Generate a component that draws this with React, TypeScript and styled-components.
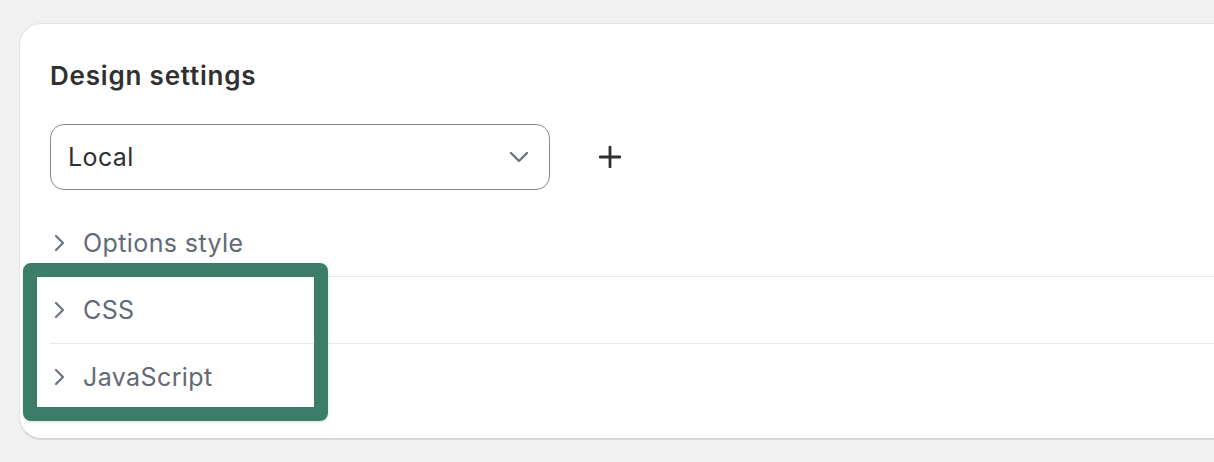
import { FC } from "react";
import styled, { createGlobalStyle } from "styled-components";

const GlobalStyle = createGlobalStyle`
  html, body {
    margin: 0;
    padding: 0;
    background: #f1f1f1;
    overflow: hidden;
  }
  body {
    font-family: Inter, "Noto Sans", "Liberation Sans", sans-serif;
  }
`;

//ページ全体
const Page = styled.div`
  position: relative;
  width: 1214px;
  height: 462px;
  overflow: hidden;
  padding: 23px 0 0 19px;
  box-sizing: border-box;
`;

//カード(右側は画面外まで続く)
const Card = styled.section`
  width: 1260px;
  box-sizing: border-box;
  background: #ffffff;
  border: 1px solid #e3e3e3;
  border-bottom-color: #d2d2d2;
  border-radius: 22px;
  box-shadow: 0 1px 0 #d6d6d6;
  padding: 36px 0 28px 30px;
`;

const Title = styled.h2`
  margin: 0;
  font-size: 26px;
  line-height: 32px;
  font-weight: 600;
  color: #303030;
  letter-spacing: 0.8px;
`;

const SelectRow = styled.div`
  display: flex;
  align-items: center;
  gap: 48px;
  margin-top: 32px;
`;

const SelectBox = styled.button`
  display: flex;
  align-items: center;
  justify-content: space-between;
  width: 500px;
  height: 66px;
  box-sizing: border-box;
  padding: 0 20px 0 17px;
  background: #ffffff;
  border: 1px solid #8a8a8a;
  border-radius: 14px;
  font-family: inherit;
  font-size: 25px;
  letter-spacing: 0.4px;
  color: #303030;
  cursor: pointer;
`;

const PlusButton = styled.button`
  display: flex;
  align-items: center;
  justify-content: center;
  width: 24px;
  height: 24px;
  padding: 0;
  border: none;
  background: transparent;
  cursor: pointer;
`;

const Sections = styled.div`
  margin-top: 20px;
`;

const SectionRow = styled.div<{ $divider: boolean }>`
  display: flex;
  align-items: center;
  gap: 18px;
  height: 66px;
  padding-left: 3px;
  border-bottom: ${(p) => (p.$divider ? "1.5px solid #e8e8ed" : "none")};
  font-size: 25px;
  letter-spacing: 0.4px;
  color: #616a75;
  cursor: pointer;
`;

//注釈の枠(スクリーンショット上のハイライト)
const Highlight = styled.div`
  position: absolute;
  left: 23px;
  top: 263px;
  width: 305px;
  height: 158px;
  box-sizing: border-box;
  border: 14px solid #3c7d6a;
  border-radius: 8px;
  box-shadow: 0 1px 3px rgba(0, 0, 0, 0.15);
  pointer-events: none;
`;

const ChevronDown: FC = () => (
  <svg width="20" height="12" viewBox="0 0 20 12" fill="none">
    <path d="M2 2l8 8 8-8" stroke="#6b7280" strokeWidth="2.4" strokeLinecap="round" strokeLinejoin="round" />
  </svg>
);

const ChevronRight: FC = () => (
  <svg width="12" height="18" viewBox="0 0 12 18" fill="none">
    <path d="M3 2l7 7-7 7" stroke="#6b7280" strokeWidth="2.2" strokeLinecap="round" strokeLinejoin="round" />
  </svg>
);

const Plus: FC = () => (
  <svg width="22" height="22" viewBox="0 0 22 22" fill="none">
    <path d="M11 1v20M1 11h20" stroke="#303030" strokeWidth="2.8" strokeLinecap="round" />
  </svg>
);

const sections = ["Options style", "CSS", "JavaScript"];

export const App: FC = () => {
  return (
    <Page>
      <GlobalStyle />
      <Card>
        <Title>Design settings</Title>
        <SelectRow>
          <SelectBox>
            <span>Local</span>
            <ChevronDown />
          </SelectBox>
          <PlusButton aria-label="Add">
            <Plus />
          </PlusButton>
        </SelectRow>
        <Sections>
          {sections.map((s, i) => (
            <SectionRow key={s} $divider={i < sections.length - 1}>
              <ChevronRight />
              <span>{s}</span>
            </SectionRow>
          ))}
        </Sections>
      </Card>
      <Highlight />
    </Page>
  );
};

export default App;
